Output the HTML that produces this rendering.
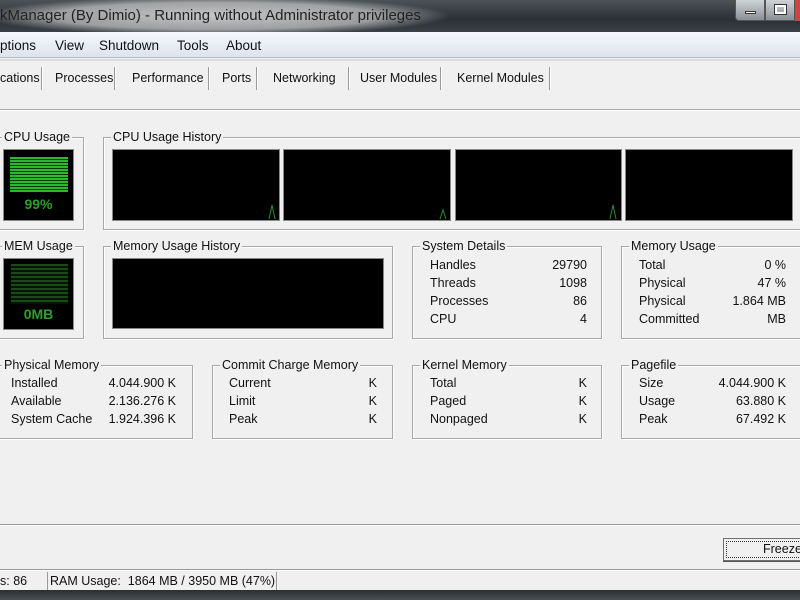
<!DOCTYPE html>
<html><head><meta charset="utf-8"><style>
*{margin:0;padding:0;box-sizing:border-box}
body{width:800px;height:600px;overflow:hidden;background:#f0f0f0;font-family:"Liberation Sans",sans-serif;font-size:12.5px;color:#111;position:relative}
.a{position:absolute;white-space:nowrap}
.g{position:absolute;border:1px solid #a8a8a8;box-shadow:1px 1px 0 #fff inset,1px 1px 0 #fff}
.g>.t{position:absolute;top:-9px;left:7px;background:#f0f0f0;padding:0 2px;line-height:16px}
.blk{position:absolute;background:#000;border:1px solid #888}
.r{position:absolute;line-height:18px}
.sep{position:absolute;top:67px;width:2px;height:23px;border-left:1px solid #999;border-right:1px solid #fff}
</style></head><body>
<div class="a" style="left:0;top:0;width:800px;height:32px;background:linear-gradient(#4c5256,#2a3036 60%,#3a4046);"></div>
<div class="a" style="left:-20px;top:0;width:470px;height:32px;background:radial-gradient(ellipse 50% 60% at center,rgba(215,215,215,0.9),rgba(200,200,200,0.7) 70%,rgba(0,0,0,0) 100%)"></div>
<div class="a" style="left:0;top:4px;font-size:15px;color:#222;line-height:24px">kManager (By Dimio) - Running without Administrator privileges</div>
<div class="a" style="left:735px;top:0;width:30px;height:21px;border:1px solid #555;border-top:none;border-radius:0 0 0 4px;background:linear-gradient(#cfd3d8,#8a9096)"><div class="a" style="left:9px;top:11px;width:11px;height:3px;background:#fff;border:1px solid #333"></div></div>
<div class="a" style="left:765px;top:0;width:30px;height:21px;border:1px solid #555;border-top:none;background:linear-gradient(#cfd3d8,#8a9096)"><div class="a" style="left:9px;top:5px;width:11px;height:9px;border:2px solid #fff;outline:1px solid #333"></div></div>
<div class="a" style="left:795px;top:0;width:5px;height:21px;background:#c44"></div>
<div class="a" style="left:0;top:32px;width:800px;height:26px;background:linear-gradient(#f6f8fc,#dde3ef);border-bottom:1px solid #bbb"></div>
<div class="a" style="left:0;top:37px;font-size:13.5px;line-height:17px">ptions</div>
<div class="a" style="left:55px;top:37px;font-size:13.5px;line-height:17px">View</div>
<div class="a" style="left:99px;top:37px;font-size:13.5px;line-height:17px">Shutdown</div>
<div class="a" style="left:177px;top:37px;font-size:13.5px;line-height:17px">Tools</div>
<div class="a" style="left:226px;top:37px;font-size:13.5px;line-height:17px">About</div>
<div class="a" style="left:0;top:59px;width:800px;height:2px;background:#ddd"></div>
<div class="a" style="left:0;top:71px;line-height:15px">cations</div>
<div class="a" style="left:55px;top:71px;line-height:15px">Processes</div>
<div class="a" style="left:132px;top:71px;line-height:15px">Performance</div>
<div class="a" style="left:222px;top:71px;line-height:15px">Ports</div>
<div class="a" style="left:273px;top:71px;line-height:15px">Networking</div>
<div class="a" style="left:360px;top:71px;line-height:15px">User Modules</div>
<div class="a" style="left:457px;top:71px;line-height:15px">Kernel Modules</div>
<div class="sep" style="left:41px"></div><div class="sep" style="left:114px"></div><div class="sep" style="left:208px"></div><div class="sep" style="left:256px"></div><div class="sep" style="left:348px"></div><div class="sep" style="left:440px"></div><div class="sep" style="left:549px"></div>
<div class="a" style="left:0;top:109px;width:800px;height:2px;border-top:1px solid #aaa;border-bottom:1px solid #fff"></div>

<div class="g" style="left:-5px;top:137px;width:89px;height:93px"><div class="t" style="left:6px">CPU Usage</div></div>
<div class="blk" style="left:3px;top:149px;width:71px;height:72px"></div>
<div class="a" style="left:10px;top:157px;width:58px;height:35px;background:repeating-linear-gradient(#2eb82e 0 2px,#0a3a0a 2px 3px)"></div>
<div class="a" style="left:3px;top:196px;width:71px;text-align:center;color:#2ea02e;font-weight:bold;font-size:14px">99%</div>

<div class="g" style="left:103px;top:137px;width:710px;height:93px"><div class="t">CPU Usage History</div></div>
<div class="blk" style="left:112px;top:149px;width:168px;height:72px"></div>
<div class="blk" style="left:283px;top:149px;width:168px;height:72px"></div>
<div class="blk" style="left:455px;top:149px;width:167px;height:72px"></div>
<div class="blk" style="left:625px;top:149px;width:168px;height:72px"></div>
<svg class="a" style="left:0;top:0" width="800" height="230"><g stroke="#2c8a2c" fill="none" stroke-width="1"><path d="M269 219 L272 205 L275 219"/><path d="M440 219 L443 210 L446 219"/><path d="M610 219 L613 205 L616 219"/></g></svg>

<div class="g" style="left:-5px;top:246px;width:89px;height:93px"><div class="t" style="left:6px">MEM Usage</div></div>
<div class="blk" style="left:3px;top:258px;width:71px;height:72px"></div>
<div class="a" style="left:11px;top:264px;width:57px;height:40px;background:repeating-linear-gradient(#1a4a1a 0 2px,#051505 2px 4px)"></div>
<div class="a" style="left:3px;top:306px;width:71px;text-align:center;color:#2ea02e;font-weight:bold;font-size:14px">0MB</div>

<div class="g" style="left:103px;top:246px;width:290px;height:93px"><div class="t">Memory Usage History</div></div>
<div class="blk" style="left:112px;top:258px;width:272px;height:71px"></div>

<div class="g" style="left:412px;top:246px;width:190px;height:93px"><div class="t">System Details</div></div>
<div class="r" style="left:430px;top:256px">Handles<br>Threads<br>Processes<br>CPU</div>
<div class="r" style="left:500px;top:256px;width:87px;text-align:right">29790<br>1098<br>86<br>4</div>

<div class="g" style="left:621px;top:246px;width:190px;height:93px"><div class="t">Memory Usage</div></div>
<div class="r" style="left:639px;top:256px">Total<br>Physical<br>Physical<br>Committed</div>
<div class="r" style="left:680px;top:256px;width:106px;text-align:right">0 %<br>47 %<br>1.864 MB<br>MB</div>

<div class="g" style="left:-5px;top:365px;width:198px;height:74px"><div class="t" style="left:6px">Physical Memory</div></div>
<div class="r" style="left:11px;top:374px">Installed<br>Available<br>System Cache</div>
<div class="r" style="left:90px;top:374px;width:86px;text-align:right">4.044.900 K<br>2.136.276 K<br>1.924.396 K</div>

<div class="g" style="left:212px;top:365px;width:181px;height:74px"><div class="t">Commit Charge Memory</div></div>
<div class="r" style="left:229px;top:374px">Current<br>Limit<br>Peak</div>
<div class="r" style="left:300px;top:374px;width:77px;text-align:right">K<br>K<br>K</div>

<div class="g" style="left:412px;top:365px;width:190px;height:74px"><div class="t">Kernel Memory</div></div>
<div class="r" style="left:430px;top:374px">Total<br>Paged<br>Nonpaged</div>
<div class="r" style="left:500px;top:374px;width:87px;text-align:right">K<br>K<br>K</div>

<div class="g" style="left:621px;top:365px;width:190px;height:74px"><div class="t">Pagefile</div></div>
<div class="r" style="left:639px;top:374px">Size<br>Usage<br>Peak</div>
<div class="r" style="left:680px;top:374px;width:106px;text-align:right">4.044.900 K<br>63.880 K<br>67.492 K</div>

<div class="a" style="left:0;top:524px;width:800px;height:2px;border-top:1px solid #999;border-bottom:1px solid #fff"></div>
<div class="a" style="left:723px;top:538px;width:90px;height:23px;border:1px solid #707070;border-right:none;background:#f0f0f0;box-shadow:0 1px 0 #555"><div class="a" style="left:2px;top:2px;right:0;bottom:2px;border:1px dotted #333;border-right:none"></div><div class="a" style="left:39px;top:3px;line-height:15px">Freeze</div></div>
<div class="a" style="left:0;top:569px;width:800px;height:2px;border-top:1px solid #999;border-bottom:1px solid #fff"></div>
<div class="a" style="left:0;top:574px;line-height:15px">s: 86</div>
<div class="a" style="left:47px;top:572px;width:230px;height:18px;border-left:1px solid #999;border-right:1px solid #999"></div>
<div class="a" style="left:50px;top:574px;line-height:15px">RAM Usage:&nbsp; 1864 MB / 3950 MB (47%)</div>
<div class="a" style="left:0;top:590px;width:800px;height:10px;background:linear-gradient(#2a2e32,#4a5054)"></div>
</body></html>
